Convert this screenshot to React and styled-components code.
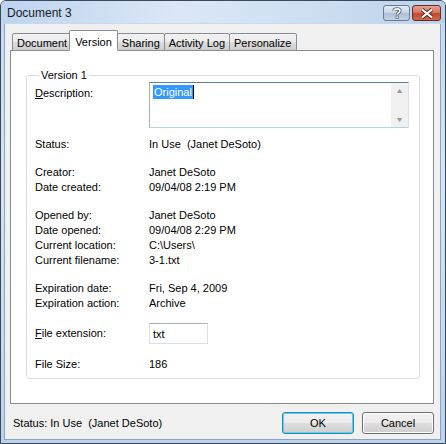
import styled, { createGlobalStyle } from 'styled-components';

const Global = createGlobalStyle`
  html, body {
    margin: 0;
    padding: 0;
    background: #ffffff;
  }
  * {
    box-sizing: border-box;
  }
`;

const font = `"Liberation Sans", Arial, sans-serif`;

const tabs = ['Document', 'Version', 'Sharing', 'Activity Log', 'Personalize'];

const groups = [
    [{ label: 'Status:', value: 'In Use  (Janet DeSoto)' }],
    [
        { label: 'Creator:', value: 'Janet DeSoto' },
        { label: 'Date created:', value: '09/04/08 2:19 PM' },
    ],
    [
        { label: 'Opened by:', value: 'Janet DeSoto' },
        { label: 'Date opened:', value: '09/04/08 2:29 PM' },
        { label: 'Current location:', value: 'C:\\Users\\' },
        { label: 'Current filename:', value: '3-1.txt' },
    ],
    [
        { label: 'Expiration date:', value: 'Fri, Sep 4, 2009' },
        { label: 'Expiration action:', value: 'Archive' },
    ],
];

function HelpGlyph() {
    return (
        <svg width="12" height="12" viewBox="0 0 12 12">
            <path
                d="M3 3.5 C3 1.3 9 1.3 9 3.8 C9 5.6 6.2 5.6 6.2 7.6"
                fill="none"
                stroke="#4a5566"
                strokeWidth="3.2"
            />
            <path
                d="M3 3.5 C3 1.3 9 1.3 9 3.8 C9 5.6 6.2 5.6 6.2 7.6"
                fill="none"
                stroke="#ffffff"
                strokeWidth="1.6"
            />
            <rect x="4.6" y="8.6" width="3.2" height="3" fill="#4a5566" />
            <rect x="5.3" y="9.3" width="1.8" height="1.6" fill="#ffffff" />
        </svg>
    );
}

function CloseGlyph() {
    return (
        <svg width="14" height="11" viewBox="0 0 14 11">
            <path d="M2 1.5 L12 9.5 M12 1.5 L2 9.5" stroke="#5a2a22" strokeWidth="4" />
            <path d="M2 1.5 L12 9.5 M12 1.5 L2 9.5" stroke="#ffffff" strokeWidth="2.2" />
        </svg>
    );
}

export default function App() {
    return (
        <>
            <Global />
            <Window>
                <TitleBar>
                    <Title>Document 3</Title>
                    <Caption>
                        <CaptionButton>
                            <HelpGlyph />
                        </CaptionButton>
                        <CaptionButton $close>
                            <CloseGlyph />
                        </CaptionButton>
                    </Caption>
                </TitleBar>
                <Body>
                    <TabRow>
                        {tabs.map((t) => (
                            <Tab key={t} $active={t === 'Version'}>
                                {t}
                            </Tab>
                        ))}
                    </TabRow>
                    <Panel>
                        <GroupBox>
                            <Legend>Version 1</Legend>
                            <DescRow>
                                <Label>
                                    <u>D</u>escription:
                                </Label>
                                <TextArea>
                                    <Selected>Original</Selected>
                                    <Caret />
                                    <ScrollBar>
                                        <Arrow>▲</Arrow>
                                        <Arrow>▼</Arrow>
                                    </ScrollBar>
                                </TextArea>
                            </DescRow>
                            {groups.map((g, i) => (
                                <Section key={i}>
                                    {g.map((r) => (
                                        <Row key={r.label}>
                                            <Label>{r.label}</Label>
                                            <Value>{r.value}</Value>
                                        </Row>
                                    ))}
                                </Section>
                            ))}
                            <Section $last>
                                <Row $tall>
                                    <Label>
                                        <u>F</u>ile extension:
                                    </Label>
                                    <Field>txt</Field>
                                </Row>
                                <Row>
                                    <Label>File Size:</Label>
                                    <Value>186</Value>
                                </Row>
                            </Section>
                        </GroupBox>
                    </Panel>
                    <Footer>
                        <StatusText>Status: In Use&nbsp; (Janet DeSoto)</StatusText>
                        <Buttons>
                            <Button $default>OK</Button>
                            <Button>Cancel</Button>
                        </Buttons>
                    </Footer>
                </Body>
            </Window>
        </>
    );
}

const Window = styled.div`
    width: 446px;
    height: 444px;
    display: flex;
    flex-direction: column;
    border: 1px solid #3a4a5c;
    border-radius: 6px 6px 0 0;
    background: linear-gradient(180deg, #c4d8ef 0%, #d6e4f4 40%, #bcd2ec 100%);
    font-family: ${font};
    font-size: 11px;
    color: #000;
    overflow: hidden;
`;

const TitleBar = styled.div`
    height: 22px;
    display: flex;
    align-items: center;
    justify-content: space-between;
    padding: 0 4px 0 6px;
    background: linear-gradient(100deg, #bdd3ee 0%, #dbe7f6 40%, #cddef1 70%, #b9d0eb 100%);
`;

const Title = styled.span`
    font-size: 12px;
    color: #1c1c1c;
    padding-top: 2px;
`;

const Caption = styled.div`
    display: flex;
    gap: 2px;
    align-self: flex-start;
    padding-top: 4px;
`;

const CaptionButton = styled.div`
    width: ${({ $close }) => ($close ? '29px' : '27px')};
    height: 16px;
    display: flex;
    align-items: center;
    justify-content: center;
    border: 1px solid ${({ $close }) => ($close ? '#6b2a22' : '#6b7b90')};
    border-radius: 3px;
    background: ${({ $close }) =>
        $close
            ? 'linear-gradient(180deg, #e4a294 0%, #d4785f 45%, #c0482c 55%, #d06a4c 100%)'
            : 'linear-gradient(180deg, #e2ebf6 0%, #c9d7e8 45%, #aebfd6 55%, #c3d3e6 100%)'};
`;

const Body = styled.div`
    flex: 1;
    margin: 1px 4px 3px 3px;
    background: #f0f0f0;
    border: 1px solid #8aa4c4;
    border-top: none;
    display: flex;
    flex-direction: column;
    padding: 6px 6px 0 5px;
`;

const TabRow = styled.div`
    display: flex;
    align-items: flex-end;
    height: 21px;
    padding-left: 2px;
    position: relative;
    z-index: 1;
    margin-bottom: -1px;
`;

const Tab = styled.div`
    height: ${({ $active }) => ($active ? '21px' : '18px')};
    padding: ${({ $active }) => ($active ? '2px 5px 0' : '2px 4px 0')};
    margin: ${({ $active }) => ($active ? '0 -1px 0 -2px' : '0 -1px 0 0')};
    border: 1px solid #898c95;
    border-bottom: ${({ $active }) => ($active ? '1px solid #ffffff' : '1px solid #898c95')};
    border-radius: 2px 2px 0 0;
    background: ${({ $active }) =>
        $active ? '#ffffff' : 'linear-gradient(180deg, #f2f2f2 0%, #ebebeb 50%, #dddddd 51%, #cfcfcf 100%)'};
    display: flex;
    align-items: center;
    font-size: 11px;
    white-space: nowrap;
    position: relative;
    z-index: ${({ $active }) => ($active ? 2 : 1)};
`;

const Panel = styled.div`
    height: 354px;
    background: #ffffff;
    border: 1px solid #898c95;
    padding: 17px 14px 0 15px;
`;

const GroupBox = styled.fieldset`
    margin: 0;
    height: 311px;
    border: 1px solid #d5dfe5;
    border-radius: 3px;
    padding: 0 10px 0 8px;
`;

const Legend = styled.legend`
    padding: 0 2px;
    margin-left: 4px;
    font-size: 11px;
    line-height: 14px;
`;

const DescRow = styled.div`
    display: flex;
    align-items: flex-start;
    margin-top: 0;
`;

const Label = styled.div`
    width: 114px;
    flex-shrink: 0;
    font-size: 11px;
    line-height: 15px;

    ${DescRow} & {
        padding-top: 4px;
    }
`;

const TextArea = styled.div`
    width: 260px;
    height: 46px;
    border: 1px solid #abadb3;
    border-top-color: #5d7fa6;
    border-right-color: #dbdfe6;
    border-bottom-color: #b4d2e6;
    position: relative;
    padding: 2px 0 0 3px;
    font-size: 11px;
    line-height: 14px;
    display: flex;
    align-items: flex-start;
`;

const Selected = styled.span`
    background: #3399ff;
    color: #ffffff;
    padding: 0 1px;
`;

const Caret = styled.span`
    width: 1px;
    height: 14px;
    background: #000;
`;

const ScrollBar = styled.div`
    position: absolute;
    right: 0;
    top: 0;
    bottom: 0;
    width: 17px;
    background: #f0f0f0;
    display: flex;
    flex-direction: column;
    justify-content: space-between;
    align-items: center;
    padding: 4px 0 3px;
`;

const Arrow = styled.span`
    font-size: 7px;
    line-height: 8px;
    color: #9a9a9a;
    transform: scaleX(1.3);
`;

const Section = styled.div`
    margin-top: ${({ $last }) => ($last ? '11px' : '13px')};

    ${DescRow} + & {
        margin-top: 9px;
    }
`;

const Row = styled.div`
    display: flex;
    align-items: center;
    height: ${({ $tall }) => ($tall ? '22px' : '15px')};
    margin-bottom: ${({ $tall }) => ($tall ? '13px' : '0')};
`;

const Value = styled.div`
    font-size: 11px;
    line-height: 15px;
    white-space: pre;
`;

const Field = styled.div`
    width: 59px;
    height: 21px;
    border: 1px solid #dbdfe6;
    border-top-color: #abadb3;
    padding: 3px 0 0 3px;
    font-size: 11px;
    line-height: 14px;
`;

const Footer = styled.div`
    flex: 1;
    display: flex;
    align-items: center;
    justify-content: space-between;
    padding: 2px 0 0 3px;
`;

const StatusText = styled.span`
    font-size: 11px;
`;

const Buttons = styled.div`
    display: flex;
    gap: 8px;
`;

const Button = styled.div`
    width: 72px;
    height: 22px;
    display: flex;
    align-items: center;
    justify-content: center;
    border: 1px solid ${({ $default }) => ($default ? '#3c7fb1' : '#707070')};
    border-radius: 3px;
    box-shadow: ${({ $default }) => ($default ? 'inset 0 0 0 1px #48d8fb' : 'inset 0 0 0 1px #fcfcfc')};
    background: linear-gradient(180deg, #f2f2f2 0%, #ebebeb 50%, #dddddd 51%, #cfcfcf 100%);
    font-size: 11px;
`;
